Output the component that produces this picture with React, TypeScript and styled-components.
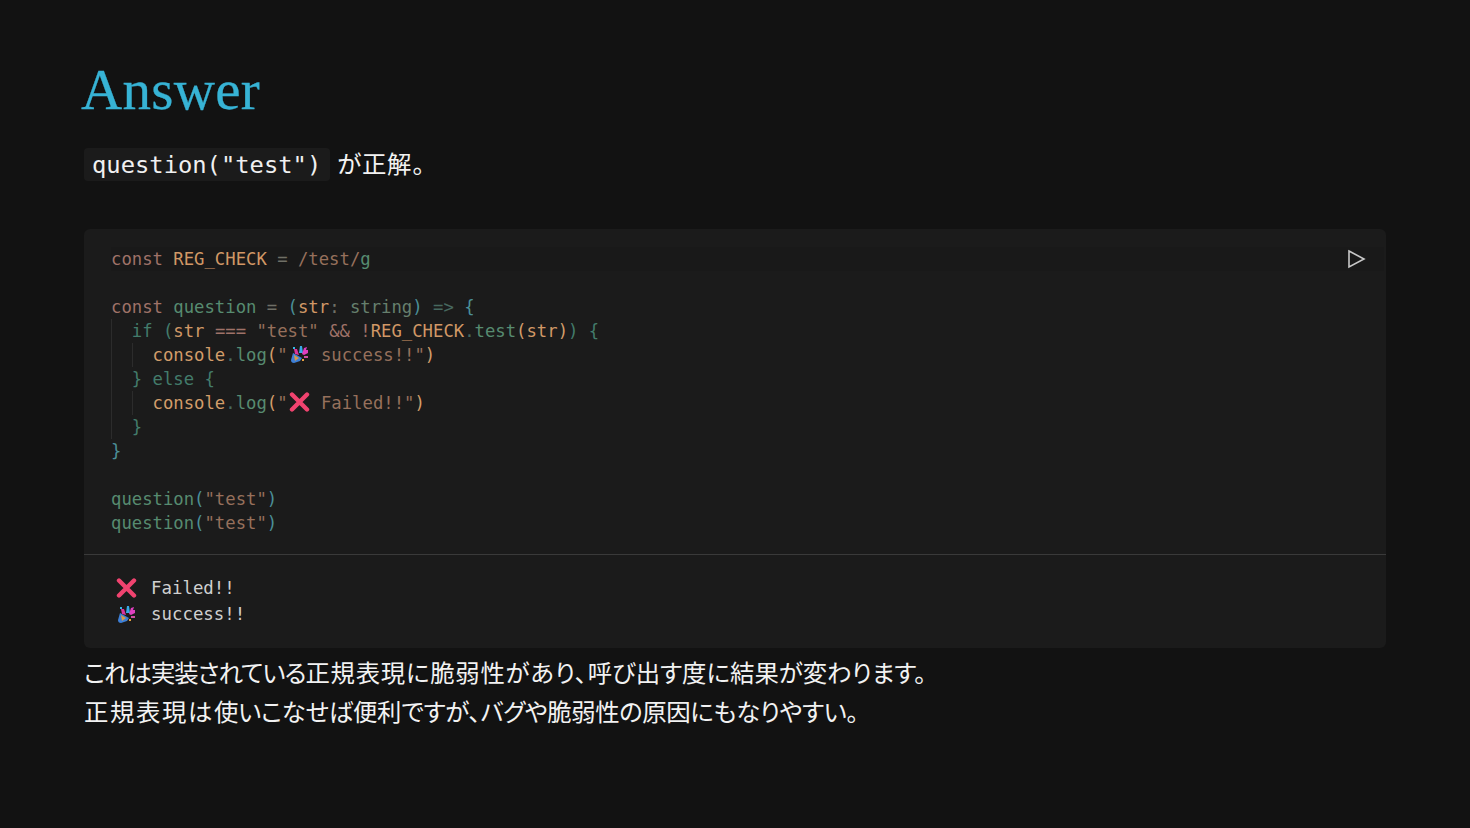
import React from 'react';
import styled, { createGlobalStyle } from 'styled-components';

const GlobalStyle = createGlobalStyle`
  html, body {
    margin: 0;
    background: #121212;
  }
`;

const monoStack = "'DejaVu Sans Mono', monospace";

const Slide = styled.main`
  box-sizing: border-box;
  width: 1470px;
  height: 828px;
  padding: 57px 84px 0;
  background: #121212;
  color: #f2f2f2;
  font-family: 'Noto Sans CJK JP', sans-serif;
  overflow: hidden;
`;

const Title = styled.h1`
  margin: 0 0 0 -3px;
  font-family: 'Liberation Serif', serif;
  font-weight: 400;
  font-size: 57px;
  line-height: 66px;
  letter-spacing: 0.3px;
  color: #37b3d5;
  -webkit-text-stroke: 0.3px #37b3d5;
`;

const Lead = styled.p`
  display: flex;
  align-items: flex-start;
  gap: 7px;
  margin: 25px 0 48px;
  font-size: 24px;
  line-height: 33px;
`;

const LeadText = styled.span`
  font-size: 24.4px;
  line-height: 29px;
  letter-spacing: 0.8px;
  font-feature-settings: 'palt';
`;

const InlineCode = styled.code`
  padding: 1px 9px 0 8px;
  height: 32px;
  border-radius: 4px;
  background: #1b1b1b;
  font-family: ${monoStack};
  font-size: 23.8px;
  color: #f0f0f0;
`;

const Playground = styled.section`
  border-radius: 6px;
  background: #1b1b1b;
`;

const Editor = styled.div`
  position: relative;
  box-sizing: border-box;
  height: 326px;
  padding: 18px 27px 20px;
  border-bottom: 1px solid #3a3a3a;
  font-family: ${monoStack};
  font-size: 17.25px;
  line-height: 24px;
`;

const Line = styled.div<{ $current?: boolean }>`
  height: 24px;
  white-space: pre;
  ${(p) => (p.$current ? 'background: #191919; margin-right: -25px;' : '')}
`;

const Indent = styled.div`
  padding-left: calc(2ch - 1px);
  border-left: 1px solid #2c2c2c;
`;

const Tok = styled.span<{ $c: string }>`
  color: ${(p) => p.$c};
`;

const RunButton = styled.button`
  position: absolute;
  top: 20px;
  right: 20px;
  display: flex;
  padding: 0;
  border: 0;
  background: none;
  color: #c8c8c8;
`;

const Output = styled.div`
  padding: 20px 32px 21px;
  font-family: ${monoStack};
  font-size: 17.4px;
  line-height: 26px;
  color: #d0d0d0;
`;

const OutputRow = styled.div`
  display: flex;
  align-items: center;
  gap: 14px;
  height: 26px;
`;

const EmojiBox = styled.svg`
  display: inline-block;
  vertical-align: -3px;
  width: 21px;
  height: 20px;
  margin: 0 1px;
`;

const OutputEmoji = styled.span`
  display: flex;
  margin: 0 -1px;
`;

const Body = styled.p`
  margin: 4px 0 0;
  font-size: 24.4px;
  line-height: 39px;
  font-feature-settings: 'palt';
  color: #f2f2f2;
`;

// the reference sets kana tighter and kanji looser than palt does here
const Seg = styled.span<{ $track: number }>`
  letter-spacing: ${(p) => p.$track}px;
`;

const Cross = () => (
  <EmojiBox viewBox="0 0 21 20" aria-hidden="true">
    <path d="M3 2.5 L18 17.5 M18 2.5 L3 17.5" stroke="#f0436f" strokeWidth="4.4" strokeLinecap="round" />
  </EmojiBox>
);

const Party = () => (
  <EmojiBox viewBox="0 0 21 20" aria-hidden="true">
    <path d="M4 9 L13 14 L11 17 L5 19 Q2 19 2 16 Z" fill="#3d7fd6" />
    <path d="M5 11 L10 14 L6 17 Z" fill="#d99a45" />
    <path d="M5 5 L8 5 L10 11 L6 10 Z" fill="#d8359d" />
    <path d="M10 9 L11 2 L13 2 L14 9 Z" fill="#37a9e6" />
    <path d="M13 10 L15 4 L18 3 L17 6 L19 6 L19 9 L15 11 Z" fill="#e03fc0" />
    <rect x="15" y="12" width="4" height="2" fill="#cf4fa0" />
    <rect x="13" y="15" width="2" height="2" fill="#e8a13f" />
    <rect x="4" y="3" width="2" height="2" fill="#37b6e8" />
  </EmojiBox>
);

const keyword = '#9f7268';
const ident = '#d19866';
const fn = '#578b70';
const str = '#96705c';
const teal = '#4b8f98';
const dim = '#47685f';
const type = '#667f6d';
const brace = '#437c6b';
const call = '#d29d6a';
const plain = '#6f6f66';

const Call = ({ body, emoji }: { body: string; emoji: React.ReactNode }) => (
  <Line>
    <Tok $c={call}>console</Tok>
    <Tok $c={dim}>.</Tok>
    <Tok $c={fn}>log</Tok>
    <Tok $c={call}>(</Tok>
    <Tok $c={str}>"</Tok>
    {emoji} <Tok $c={str}>{body}"</Tok>
    <Tok $c={call}>)</Tok>
  </Line>
);

const QuestionCall = () => (
  <Line>
    <Tok $c={fn}>question</Tok>
    <Tok $c={teal}>(</Tok>
    <Tok $c={str}>"test"</Tok>
    <Tok $c={teal}>)</Tok>
  </Line>
);

export default function App() {
  return (
    <Slide>
      <GlobalStyle />
      <Title>Answer</Title>
      <Lead>
        <InlineCode>question("test")</InlineCode>
        <LeadText>が正解。</LeadText>
      </Lead>
      <Playground>
        <Editor>
          <RunButton aria-label="Run">
            <svg width="20" height="20" viewBox="0 0 20 20" fill="none">
              <path d="M3 2 L18 10 L3 18 Z" stroke="currentColor" strokeWidth="1.6" strokeLinejoin="miter" />
            </svg>
          </RunButton>
          <Line $current>
            <Tok $c={keyword}>const</Tok> <Tok $c={ident}>REG_CHECK</Tok> <Tok $c={plain}>=</Tok>{' '}
            <Tok $c={str}>/test/</Tok>
            <Tok $c={fn}>g</Tok>
          </Line>
          <Line />
          <Line>
            <Tok $c={keyword}>const</Tok> <Tok $c={fn}>question</Tok> <Tok $c={plain}>=</Tok>{' '}
            <Tok $c={teal}>(</Tok>
            <Tok $c={ident}>str</Tok>
            <Tok $c={plain}>:</Tok> <Tok $c={type}>string</Tok>
            <Tok $c={teal}>)</Tok> <Tok $c={dim}>=&gt;</Tok> <Tok $c={teal}>{'{'}</Tok>
          </Line>
          <Indent>
            <Line>
              <Tok $c={brace}>if</Tok> <Tok $c={brace}>(</Tok>
              <Tok $c={ident}>str</Tok> <Tok $c={keyword}>===</Tok> <Tok $c={str}>"test"</Tok>{' '}
              <Tok $c={keyword}>&amp;&amp;</Tok> <Tok $c={keyword}>!</Tok>
              <Tok $c={ident}>REG_CHECK</Tok>
              <Tok $c={dim}>.</Tok>
              <Tok $c={fn}>test</Tok>
              <Tok $c={call}>(</Tok>
              <Tok $c={ident}>str</Tok>
              <Tok $c={call}>)</Tok>
              <Tok $c={brace}>)</Tok> <Tok $c={brace}>{'{'}</Tok>
            </Line>
            <Indent>
              <Call body="success!!" emoji={<Party />} />
            </Indent>
            <Line>
              <Tok $c={brace}>{'}'}</Tok> <Tok $c={brace}>else</Tok> <Tok $c={brace}>{'{'}</Tok>
            </Line>
            <Indent>
              <Call body="Failed!!" emoji={<Cross />} />
            </Indent>
            <Line>
              <Tok $c={brace}>{'}'}</Tok>
            </Line>
          </Indent>
          <Line>
            <Tok $c={teal}>{'}'}</Tok>
          </Line>
          <Line />
          <QuestionCall />
          <QuestionCall />
        </Editor>
        <Output>
          <OutputRow>
            <OutputEmoji>
              <Cross />
            </OutputEmoji>
            <span>Failed!!</span>
          </OutputRow>
          <OutputRow>
            <OutputEmoji>
              <Party />
            </OutputEmoji>
            <span>success!!</span>
          </OutputRow>
        </Output>
      </Playground>
      <Body>
        <Seg $track={-1}>これは実装されている</Seg>
        <Seg $track={0.75}>正規表現に脆弱性があり、</Seg>
        呼び出す度に結果が変わります。
        <br />
        <Seg $track={1.6}>正規表現は</Seg>
        <Seg $track={-0.25}>使いこなせば便利ですが、</Seg>
        <Seg $track={-0.4}>バグや脆弱性の原因にもなりやすい。</Seg>
      </Body>
    </Slide>
  );
}
